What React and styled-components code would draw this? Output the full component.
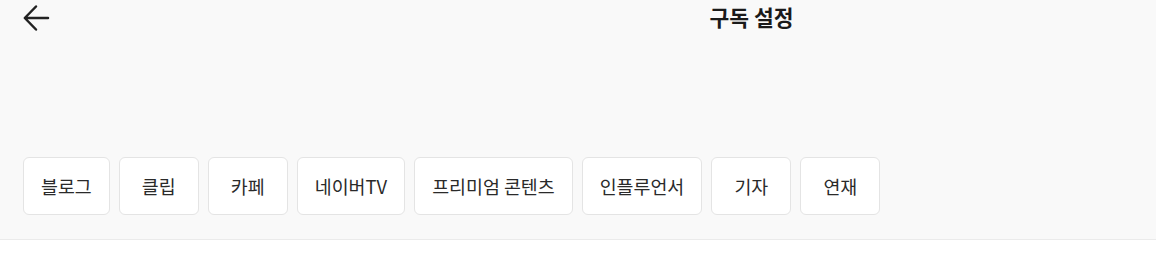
import React from "react";
import styled, { createGlobalStyle } from "styled-components";

const Global = createGlobalStyle`
  html, body { margin: 0; padding: 0; background: #ffffff; }
  body { font-family: "Noto Sans CJK KR", "Noto Sans", sans-serif; color: #222; }
  * { box-sizing: border-box; }
`;

const Page = styled.div`
  width: 100%;
`;

const Top = styled.section`
  background: #f9f9f9;
  border-bottom: 1px solid #ebebeb;
`;

const Header = styled.header`
  position: relative;
  height: 34px;
  display: flex;
  align-items: center;
  justify-content: center;
  padding-left: 347px;
`;

const BackButton = styled.button`
  position: absolute;
  left: 22px;
  top: 4px;
  width: 28px;
  height: 28px;
  padding: 0;
  border: 0;
  background: transparent;
  display: flex;
  align-items: center;
  justify-content: center;
  cursor: pointer;
  color: #222;
`;

const Title = styled.h1`
  margin: 0;
  font-size: 21.5px;
  font-weight: 700;
  color: #1a1a1a;
  line-height: 34px;
  letter-spacing: 0;
`;

const ChipRow = styled.nav`
  display: flex;
  gap: 9px;
  padding: 123px 23px 24px;
`;

const Chip = styled.button`
  height: 58px;
  min-width: 80px;
  padding: 0 17px;
  border: 1px solid #e4e4e4;
  border-radius: 6px;
  background: #ffffff;
  font-family: "Noto Sans CJK KR", "Noto Sans", sans-serif;
  font-size: 18.4px;
  color: #2a2a2a;
  white-space: nowrap;
  cursor: pointer;
`;

const categories = ["블로그", "클립", "카페", "네이버TV", "프리미엄 콘텐츠", "인플루언서", "기자", "연재"];

export default function App() {
  return (
    <Page>
      <Global />
      <Top>
        <Header>
          <BackButton aria-label="뒤로">
            <svg width="28" height="28" viewBox="0 0 28 28" fill="none">
              <path d="M26 14H3.5M14 2.5 2.8 14 14 25.5" stroke="#222" strokeWidth="2.5" strokeLinecap="round" strokeLinejoin="round" />
            </svg>
          </BackButton>
          <Title>구독 설정</Title>
        </Header>
        <ChipRow>
          {categories.map((c) => (
            <Chip key={c}>{c}</Chip>
          ))}
        </ChipRow>
      </Top>
    </Page>
  );
}
